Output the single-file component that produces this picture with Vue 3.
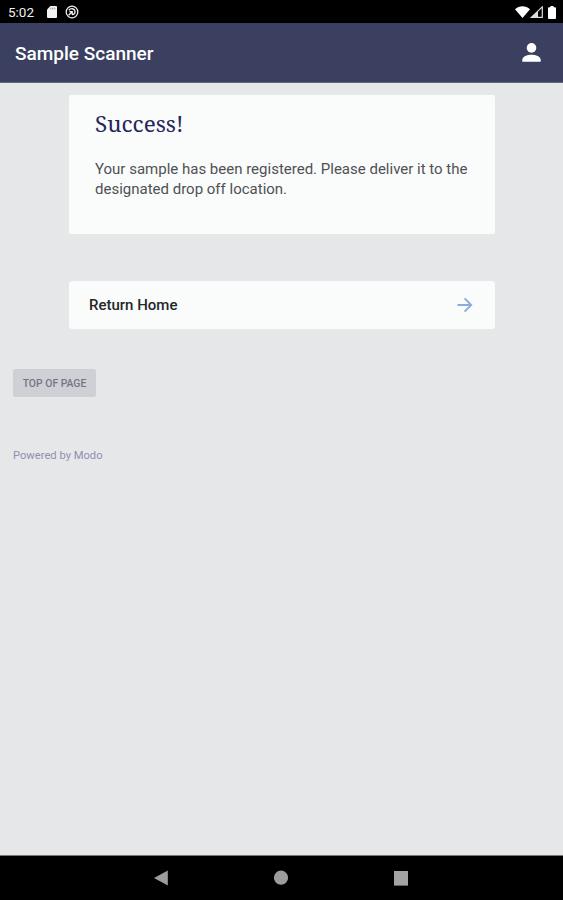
<script setup>
import { ref } from 'vue'

const time = ref('5:02')
const title = 'Sample Scanner'

const scrollToTop = () => {
  window.scrollTo({ top: 0, behavior: 'smooth' })
}
</script>

<template>
  <div class="screen">
    <div class="status-bar">
      <span class="time">{{ time }}</span>
      <svg class="sd-card" width="10" height="12" viewBox="0 0 10 12">
        <path d="M3.4 0H9a1 1 0 0 1 1 1v10a1 1 0 0 1-1 1H1a1 1 0 0 1-1-1V3.4z" fill="#f4f4f4" />
        <path d="M3.8 1.6v1.8M5.8 1.6v1.8M7.8 1.6v1.8" stroke="#777" stroke-width=".8" />
      </svg>
      <svg class="sync" width="14" height="14" viewBox="0 0 14 14" fill="none" stroke="#eee">
        <circle cx="7" cy="7" r="5.8" stroke-width="1.3" />
        <path d="M3.8 5.2c2-2.5 5.8-1.8 6.2 1.2.3 2-1.2 3.4-3 3.2M3.6 10.2 7 6.8M4.4 6.6H7.2V9.4" stroke-width="1.4" />
      </svg>
      <span class="spacer"></span>
      <svg class="wifi" width="15" height="12" viewBox="0 0 15 12">
        <path d="M0 3.2C4.2-.8 10.8-.8 15 3.2L7.5 12z" fill="#fff" />
      </svg>
      <svg class="signal" width="13" height="12" viewBox="0 0 13 12">
        <path d="M1.3 11.4 12.3.9v10.5z" fill="none" stroke="#ddd" stroke-width="1.2" />
        <path d="M1 11.6 8 5v6.6z" fill="#ddd" />
      </svg>
      <svg class="battery" width="8" height="13" viewBox="0 0 8 13">
        <path d="M2.4 0h3.2v1.3H7a1 1 0 0 1 1 1V12a1 1 0 0 1-1 1H1a1 1 0 0 1-1-1V2.3a1 1 0 0 1 1-1h1.4z" fill="#fff" />
      </svg>
    </div>

    <header class="app-bar">
      <h1 class="title">{{ title }}</h1>
      <svg class="user" width="19" height="19" viewBox="0 0 19 19" fill="#fff">
        <circle cx="9.5" cy="4.9" r="4.8" />
        <path d="M.3 18.8v-2c0-3.2 4.8-5.1 9.2-5.1s9.2 1.9 9.2 5.1v2z" />
      </svg>
    </header>

    <main class="content">
      <section class="card">
        <h2 class="heading">Success!</h2>
        <p class="message">
          Your sample has been registered. Please deliver it to the<br />
          designated drop off location.
        </p>
      </section>

      <a class="link-row" href="#">
        <span class="link-label">Return Home</span>
        <svg width="16" height="16" viewBox="0 0 16 16" fill="none" stroke="#8babdc" stroke-width="1.9">
          <path d="M.5 8h13.6M7.6 1.4 14.2 8l-6.6 6.6" />
        </svg>
      </a>

      <button class="top-button" @click="scrollToTop">TOP OF PAGE</button>
      <div><a class="powered" href="#">Powered by Modo</a></div>
    </main>

    <nav class="nav-bar">
      <svg width="16" height="18" viewBox="0 0 16 18">
        <path d="M1 9 14.8 1.4v15.2z" fill="#9c9c9c" />
      </svg>
      <svg width="16" height="18" viewBox="0 0 16 18">
        <circle cx="8" cy="8.7" r="7.1" fill="#9c9c9c" />
      </svg>
      <svg width="16" height="18" viewBox="0 0 16 18">
        <rect x="1" y="2" width="14" height="14.6" fill="#a3a3a3" />
      </svg>
    </nav>
  </div>
</template>

<style>
body {
  margin: 0;
  background: #e5e7e9;
}
</style>

<style scoped>
.screen {
  display: flex;
  flex-direction: column;
  height: 900px;
  overflow: hidden;
  font-family: Roboto, sans-serif;
  background: #e5e7e9;
}

.status-bar {
  display: flex;
  align-items: center;
  box-sizing: border-box;
  flex: none;
  height: 23px;
  padding: 1px 7px 0 8px;
  background: #000;
}

.time {
  width: 38.5px;
  color: #f0f0f0;
  font-size: 13.5px;
  line-height: 20px;
}

.sync {
  margin-left: 8px;
}

.spacer {
  flex: 1;
}

.battery {
  margin-left: 5px;
}

.app-bar {
  display: flex;
  align-items: center;
  justify-content: space-between;
  box-sizing: border-box;
  flex: none;
  height: 60px;
  padding: 0 22px 1px 15px;
  background: #3b3f60;
  border-bottom: 1px solid #62667e;
}

.title {
  margin: 3px 0 0;
  color: #fff;
  font-size: 19px;
  font-weight: 500;
  line-height: 24px;
}

.content {
  flex: 1;
  padding: 12px 13px 0;
}

.card {
  box-sizing: border-box;
  height: 139px;
  margin: 0 55px 0 56px;
  padding: 14px 26px 0;
  border-radius: 2px;
  background: #fafbfb;
}

.heading {
  margin: 0;
  color: #25255c;
  font-family: "Noto Serif", "Liberation Serif", serif;
  font-size: 22.5px;
  font-weight: 400;
  line-height: 30px;
}

.message {
  margin: 20px 0 0;
  color: #505153;
  font-size: 15px;
  line-height: 20px;
  white-space: nowrap;
}

.link-row {
  display: flex;
  align-items: center;
  justify-content: space-between;
  box-sizing: border-box;
  height: 48px;
  margin: 47px 55px 0 56px;
  padding: 0 22px 0 20px;
  border-radius: 3px;
  background: #fafbfb;
  text-decoration: none;
}

.link-label {
  color: #252628;
  font-size: 15px;
  font-weight: 500;
}

.top-button {
  display: block;
  width: 83px;
  height: 28px;
  margin-top: 40px;
  padding: 0;
  border: 0;
  border-radius: 2px;
  background: #cfd0d6;
  color: #747582;
  font-family: inherit;
  font-size: 10.4px;
  font-weight: 500;
}

.powered {
  display: inline-block;
  margin-top: 52px;
  color: #8f90b4;
  font-size: 11.2px;
  line-height: 14px;
  text-decoration: none;
}

.nav-bar {
  display: flex;
  align-items: center;
  justify-content: center;
  gap: 104px;
  box-sizing: border-box;
  flex: none;
  height: 45px;
  padding-right: 1px;
  border-top: 1px solid #777;
  background: #000;
}
</style>
